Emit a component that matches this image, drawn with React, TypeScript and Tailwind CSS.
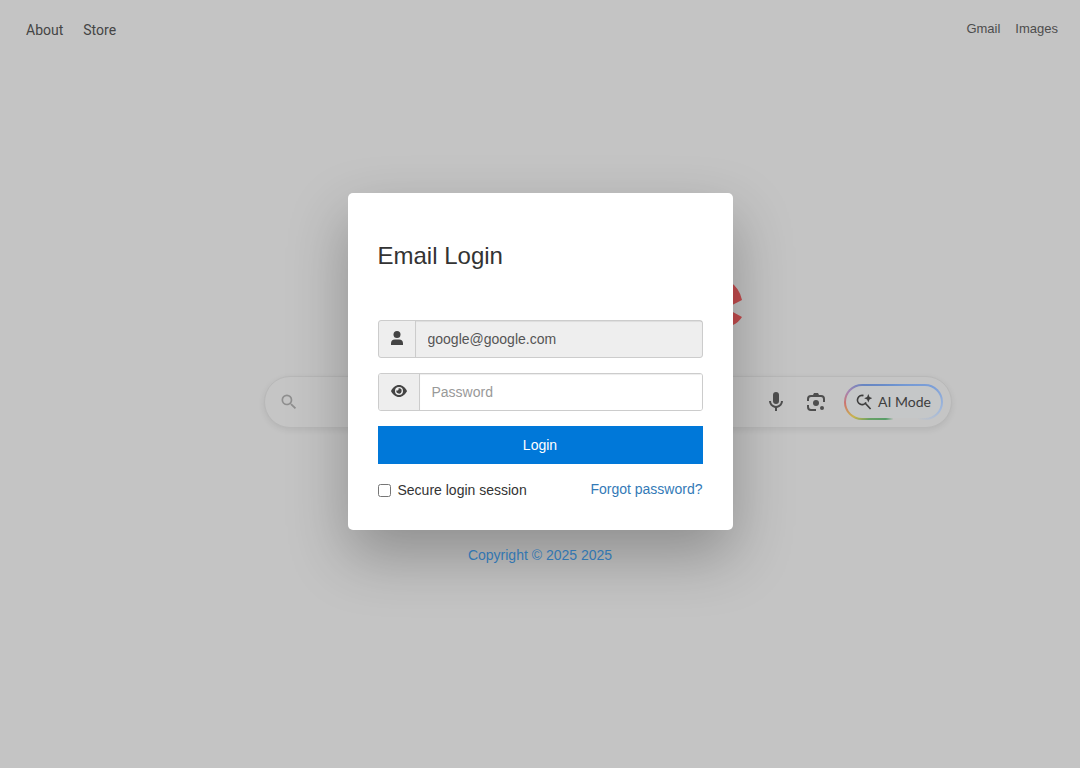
import { FormEvent } from "react";

function SearchIcon() {
  return (
    <svg viewBox="0 0 24 24" className="size-5 text-[#8f8f8f]" fill="currentColor" aria-hidden="true">
      <path d="M15.5 14h-.79l-.28-.27A6.47 6.47 0 0 0 16 9.5 6.5 6.5 0 1 0 9.5 16c1.61 0 3.09-.59 4.23-1.57l.27.28v.79l5 4.99L20.49 19l-4.99-5zm-6 0C7.01 14 5 11.99 5 9.5S7.01 5 9.5 5 14 7.01 14 9.5 11.99 14 9.5 14z" />
    </svg>
  );
}

function MicIcon() {
  return (
    <svg viewBox="0 0 24 24" className="size-6" fill="currentColor" aria-hidden="true">
      <rect x="9" y="2" width="6" height="12" rx="3" />
      <path d="M5 11h2a5 5 0 0 0 10 0h2a7 7 0 0 1-6 6.92V21h-2v-3.08A7 7 0 0 1 5 11z" />
    </svg>
  );
}

function LensIcon() {
  return (
    <svg viewBox="0 0 24 24" className="size-6" aria-hidden="true">
      <g fill="none" stroke="currentColor" strokeWidth="2">
        <path d="M4 11V9a3 3 0 0 1 3-3h10a3 3 0 0 1 3 3v3" />
        <path d="M4 15v2a3 3 0 0 0 3 3h5" />
      </g>
      <path d="M9 5l1-2h4l1 2z" fill="currentColor" />
      <circle cx="12" cy="13" r="3" fill="currentColor" />
      <circle cx="18" cy="18" r="2" fill="currentColor" />
    </svg>
  );
}

function SparkSearchIcon() {
  return (
    <svg viewBox="0 0 16 16" className="size-4" aria-hidden="true">
      <path d="M7.5 1.6A4.6 4.6 0 1 0 10 8.4M9 9l5.6 6" fill="none" stroke="currentColor" strokeWidth="1.7" />
      <path d="M12.3 0l1.2 3 2.9 1.2-2.9 1.2-1.2 3.2-1.2-3.2-2.9-1.2L11.1 3z" fill="currentColor" />
    </svg>
  );
}

function UserIcon() {
  return (
    <svg viewBox="0 0 12 14" className="h-[14px] w-3" fill="currentColor" aria-hidden="true">
      <circle cx="6" cy="3.5" r="3.5" />
      <path d="M0 14v-1.5a4 4 0 0 1 4-4h4a4 4 0 0 1 4 4V14z" />
    </svg>
  );
}

function EyeIcon() {
  return (
    <svg viewBox="0 0 576 512" className="h-[14px] w-4" aria-hidden="true">
      <path fill="currentColor" d="M572.52 241.4C518.29 135.59 410.93 40 288 40S57.68 135.64 3.48 241.41a32.35 32.35 0 0 0 0 29.19C57.71 376.41 165.07 472 288 472s230.32-95.64 284.52-201.41a32.35 32.35 0 0 0 0-29.19z" />
      <circle cx="288" cy="256" r="146" fill="#eeeeee" />
      <path fill="currentColor" d="M288 160a95.31 95.31 0 0 0-25.31 3.79 47.85 47.85 0 0 1-66.9 66.9A95.78 95.78 0 1 0 288 160z" />
    </svg>
  );
}

function Logo() {
  return (
    <svg viewBox="0 0 64 64" className="size-16 text-[#c44c4e]" fill="currentColor" aria-hidden="true">
      <path fillRule="evenodd" d="M61 27A27 27 0 1 0 52 52Q58 49 61 44L50 38A18 18 0 0 1 24 46ZM46 23A16 16 0 0 0 18 36Z" />
    </svg>
  );
}

function Backdrop() {
  return (
    <div>
      <header className="flex justify-between px-[22px] pt-5 text-[#454545]">
        <nav className="flex gap-5 pl-1 font-[Roboto,sans-serif] text-sm">
          <a href="#about">About</a>
          <a href="#store">Store</a>
        </nav>
        <nav className="flex gap-[15px] text-[13px] leading-[18px] text-[#4d4d4d]">
          <a href="#gmail">Gmail</a>
          <a href="#images">Images</a>
        </nav>
      </header>
      <main className="flex flex-col items-center pt-[233px] pl-[136px]">
        <div className="flex w-full max-w-[688px] justify-end pr-[207px]">
          <Logo />
        </div>
        <div className="mt-[39px] flex h-[52px] w-full max-w-[688px] items-center justify-between rounded-full border border-[#b8b8b8] bg-[#c5c5c5] pr-2 pl-[14px] shadow-[0_2px_6px_rgba(0,0,0,0.08)]">
          <SearchIcon />
          <div className="flex items-center text-[#4e4e4e]">
            <button type="button" aria-label="Search by voice" className="mr-4"><MicIcon /></button>
            <button type="button" aria-label="Search by image" className="mr-4"><LensIcon /></button>
            <div className="rounded-full bg-[conic-gradient(from_0deg,#6c92cf_0deg,#7c9fd8_70deg,#a3b9db_100deg,#c5c5c5_125deg,#c5c5c5_180deg,#579d68_205deg,#67a166_235deg,#c9b44e_250deg,#cd746c_268deg,#a783af_282deg,#6786c2_300deg,#6c92cf_360deg)] p-[2px]">
              <button type="button" className="flex h-8 items-center gap-[6px] rounded-full bg-[#c5c7c8] px-[10px] font-[Lato,sans-serif] text-sm text-[#3e3e3e]">
                <SparkSearchIcon />
                AI Mode
              </button>
            </div>
          </div>
        </div>
      </main>
    </div>
  );
}

function LoginCard() {
  const handleSubmit = (event: FormEvent) => event.preventDefault();

  return (
    <form
      onSubmit={handleSubmit}
      className="w-full max-w-[385px] rounded-[5px] bg-white px-[30px] pt-[47px] pb-[30px] text-sm leading-5 text-[#333333] shadow-[0_25px_60px_rgba(0,0,0,0.28)]"
    >
      <h1 className="mb-[49px] text-2xl leading-[31px]">Email Login</h1>
      <div className="flex h-[38px] rounded-[3px] border border-[#cccccc] bg-[#eeeeee] text-[#555555]">
        <label htmlFor="email" aria-label="Email" className="flex w-[37px] items-center justify-center border-r border-[#cccccc] pb-[2px] text-[#444444]">
          <UserIcon />
        </label>
        <input id="email" type="email" readOnly defaultValue="google@google.com" className="min-w-0 flex-1 px-3 shadow-[inset_0_1px_1px_rgba(0,0,0,0.075)] outline-none" />
      </div>
      <div className="mt-[15px] flex h-[38px] overflow-hidden rounded-[3px] border border-[#cccccc]">
        <label htmlFor="password" aria-label="Password" className="flex w-[41px] items-center justify-center border-r border-[#cccccc] bg-[#eeeeee] pb-[2px] text-[#444444]">
          <EyeIcon />
        </label>
        <input id="password" type="password" placeholder="Password" className="min-w-0 flex-1 bg-white px-3 shadow-[inset_0_1px_1px_rgba(0,0,0,0.075)] outline-none placeholder:text-[#999999]" />
      </div>
      <button type="submit" className="mt-[15px] h-[38px] w-full bg-[#0078d9] text-white">Login</button>
      <div className="mt-[15px] flex items-start justify-between">
        <label className="flex items-center gap-[7px] pt-[1px]">
          <input type="checkbox" className="size-[13px]" />
          Secure login session
        </label>
        <a href="#forgot" className="text-[#337ab7]">Forgot password?</a>
      </div>
    </form>
  );
}

export default function App() {
  return (
    <div className="relative min-h-screen bg-[#c4c4c4] font-['Liberation_Sans',Arial,sans-serif]">
      <Backdrop />
      <div className="absolute inset-0 flex flex-col items-center pt-[193px]">
        <LoginCard />
        <a href="#copyright" className="relative mt-[15px] text-sm leading-5 text-[#3376b0]">Copyright © 2025 2025</a>
      </div>
    </div>
  );
}
